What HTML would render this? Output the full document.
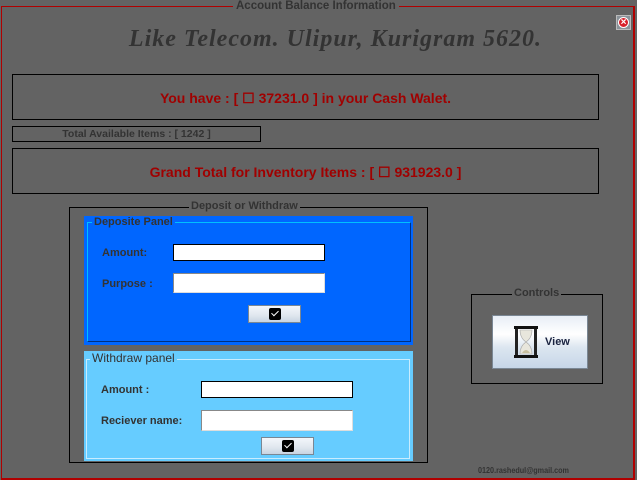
<!DOCTYPE html>
<html><head><meta charset="utf-8"><style>
*{margin:0;padding:0;box-sizing:border-box}
body{width:637px;height:480px;background:#636363;position:relative;overflow:hidden;font-family:"Liberation Sans",sans-serif}
.a{position:absolute}
.b{border:1px solid #000}
.lbl{position:absolute;font-weight:bold;font-size:11px;color:#333;white-space:nowrap}
.in{position:absolute;background:#fff}
.btn{position:absolute;background:linear-gradient(#f4f7fb,#dfe6ee 60%,#c8d4e2);border:1px solid #7a8794}
.chk{position:absolute;left:20px;top:2px;width:12px;height:12px;background:#000;border-radius:2px}
.chk:after{content:"";position:absolute;left:4px;top:1px;width:3px;height:6px;border:solid #fff;border-width:0 1px 1px 0;transform:rotate(45deg)}
</style></head><body>
<div class="a" style="left:1px;top:6px;width:634px;height:474px;border:1px solid #b00000;border-right-width:2px;border-bottom-width:2px"></div>
<div class="a" style="left:233px;top:0;padding:0 3px;background:#636363;font-size:11.5px;font-weight:bold;color:#333">Account Balance Information</div>
<div class="a" style="left:616px;top:15px;width:15px;height:15px;background:#8a9299;border:1px solid #bbb"><div style="position:absolute;left:1px;top:1px;width:11px;height:11px;border-radius:50%;background:#d8202a;border:1px solid #fff;color:#fff;font-size:10px;line-height:9px;text-align:center;font-weight:bold">×</div></div>
<div class="a" style="left:0;width:671px;top:26px;text-align:center;font-family:'Liberation Serif',serif;font-style:italic;font-weight:bold;font-size:24px;color:#333;letter-spacing:1px">Like Telecom. Ulipur, Kurigram 5620.</div>
<div class="a b" style="left:12px;top:74px;width:587px;height:46px;color:#a00000;font-weight:bold;font-size:14px;text-align:center;line-height:46px">You have : [ ☐ 37231.0 ] in your Cash Walet.</div>
<div class="a b" style="left:12px;top:126px;width:249px;height:16px;color:#333;font-weight:bold;font-size:10.5px;text-align:center;line-height:14px">Total Available Items : [ 1242 ]</div>
<div class="a b" style="left:12px;top:148px;width:587px;height:46px;color:#a00000;font-weight:bold;font-size:14px;text-align:center;line-height:46px">Grand Total for Inventory Items : [ ☐ 931923.0 ]</div>

<div class="a b" style="left:69px;top:207px;width:359px;height:256px"></div>
<div class="a" style="left:189px;top:200px;padding:0 2px;background:#636363;font-size:11px;font-weight:bold;color:#333">Deposit or Withdraw</div>

<div class="a" style="left:84px;top:216px;width:329px;height:129px;background:#0066ff">
<div class="a" style="left:3px;top:6px;width:324px;height:120px;border:1px solid #00c0ff;border-right-color:#003080;border-bottom-color:#003080"></div>
<div class="a" style="left:8px;top:0;padding:0 2px;background:#0066ff;font-size:11px;font-weight:bold;color:#333">Deposite Panel</div>
</div>
<div class="lbl" style="left:102px;top:247px">Amount:</div>
<div class="in" style="left:173px;top:244px;width:152px;height:17px;border:1px solid #000"></div>
<div class="lbl" style="left:102px;top:278px">Purpose :</div>
<div class="in" style="left:173px;top:273px;width:152px;height:20px;border:1px solid #888;border-right-color:#ddd;border-bottom-color:#ddd"></div>
<div class="btn" style="left:248px;top:305px;width:53px;height:18px"><div class="chk"></div></div>

<div class="a" style="left:84px;top:351px;width:329px;height:110px;background:#66ccff">
<div class="a" style="left:2px;top:8px;width:324px;height:100px;border:1px solid #c8ecff"></div>
<div class="a" style="left:6px;top:0;padding:0 2px;background:#66ccff;font-size:12px;color:#333">Withdraw panel</div>
</div>
<div class="lbl" style="left:101px;top:384px">Amount :</div>
<div class="in" style="left:201px;top:381px;width:152px;height:17px;border:1px solid #000"></div>
<div class="lbl" style="left:101px;top:415px">Reciever name:</div>
<div class="in" style="left:201px;top:410px;width:152px;height:21px;border:1px solid #888;border-right-color:#ddd;border-bottom-color:#ddd"></div>
<div class="btn" style="left:261px;top:437px;width:53px;height:18px"><div class="chk"></div></div>

<div class="a b" style="left:471px;top:294px;width:132px;height:90px"></div>
<div class="a" style="left:512px;top:287px;padding:0 2px;background:#636363;font-size:11px;font-weight:bold;color:#333">Controls</div>
<div class="btn" style="left:492px;top:315px;width:96px;height:54px;background:linear-gradient(#e8eef6,#fff 35%,#dce6f0 60%,#c6d6e8)">
<svg class="a" style="left:20px;top:10px" width="26" height="32" viewBox="0 0 26 32"><rect x="1" y="0" width="24" height="3" fill="#111"/><rect x="1" y="29" width="24" height="3" fill="#111"/><rect x="2" y="3" width="3" height="26" fill="#222"/><rect x="21" y="3" width="3" height="26" fill="#222"/><path d="M7 4 H19 Q19 12 13 16 Q19 20 19 28 H7 Q7 20 13 16 Q7 12 7 4Z" fill="#e8e6dc" stroke="#aaa" stroke-width=".6"/><path d="M9 27 Q13 21 17 27Z" fill="#c8c0a0"/></svg>
<div class="a" style="left:52px;top:20px;font-size:11px;font-weight:bold;color:#1a2340">View</div>
</div>
<div class="a" style="left:478px;top:465px;font-size:8.5px;font-weight:bold;color:#333;transform:scaleX(.85);transform-origin:left">0120.rashedul@gmail.com</div>
</body></html>
